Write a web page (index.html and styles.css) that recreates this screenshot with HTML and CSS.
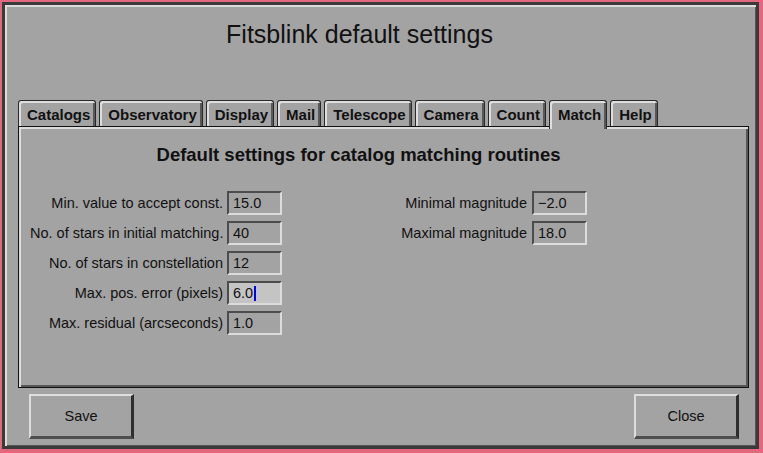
FILE: index.html
```html
<!DOCTYPE html>
<html>
<head>
<meta charset="utf-8">
<title>Fitsblink default settings</title>
<link rel="stylesheet" href="styles.css">
</head>
<body>
<div class="window">
  <div class="title">Fitsblink default settings</div>
  <div class="notebook">
    <div class="tabs">
      <div class="tab">Catalogs</div>
      <div class="tab">Observatory</div>
      <div class="tab">Display</div>
      <div class="tab">Mail</div>
      <div class="tab">Telescope</div>
      <div class="tab">Camera</div>
      <div class="tab">Count</div>
      <div class="tab active">Match</div>
      <div class="tab">Help</div>
    </div>
    <div class="panel">
      <div class="heading">Default settings for catalog matching routines</div>
      <div class="form">
        <div class="grid grid-left">
          <div class="label">Min. value to accept const.</div>
          <div class="entry">15.0</div>
          <div class="label">No. of stars in initial matching.</div>
          <div class="entry">40</div>
          <div class="label">No. of stars in constellation</div>
          <div class="entry">12</div>
          <div class="label">Max. pos. error (pixels)</div>
          <div class="entry focus">6.0<span class="cursor"></span></div>
          <div class="label">Max. residual (arcseconds)</div>
          <div class="entry">1.0</div>
        </div>
        <div class="grid grid-right">
          <div class="label">Minimal magnitude</div>
          <div class="entry">&minus;2.0</div>
          <div class="label">Maximal magnitude</div>
          <div class="entry">18.0</div>
        </div>
      </div>
    </div>
  </div>
  <div class="buttons">
    <div class="button">Save</div>
    <div class="button">Close</div>
  </div>
</div>
</body>
</html>
```

FILE: styles.css
```css
html, body {
  margin: 0;
  padding: 0;
}
body {
  background: #e2677f;
  width: 763px;
  height: 453px;
  padding: 2px 0 0 2px;
  box-sizing: border-box;
  font-family: "Liberation Sans", Arial, sans-serif;
  color: #111;
  overflow: hidden;
}
.window {
  width: 757px;
  height: 447px;
  box-sizing: border-box;
  background: #a3a3a3;
  border: 3px solid #3a3a3a;
  box-shadow: inset 2px 2px 0 #dcdcdc, inset -1px -1px 0 #555;
  display: flex;
  flex-direction: column;
}
.title {
  margin-top: 15px;
  height: 28px;
  line-height: 28px;
  font-size: 25px;
  text-align: center;
  padding-right: 42px;
}
.notebook {
  margin: 52px 0 0 13px;
  width: 731px;
}
.tabs {
  display: flex;
  gap: 3px;
  height: 26px;
  align-items: flex-start;
  position: relative;
  z-index: 1;
}
.tab {
  box-sizing: border-box;
  height: 26px;
  padding: 5px 5px 0 8px;
  line-height: 17px;
  font-size: 15px;
  font-weight: bold;
  border: 1px solid #2a2a2a;
  border-bottom: none;
  border-radius: 3px 3px 0 0;
  box-shadow: inset 2px 2px 0 #dedede, inset -2px 0 0 #585858;
}
.tab.active {
  height: 29px;
  margin-bottom: -3px;
  background: #a3a3a3;
}
.panel {
  box-sizing: border-box;
  height: 262px;
  border: 1px solid #111;
  box-shadow: inset 2px 2px 0 #dcdcdc, inset -2px -2px 0 #575757;
  display: flex;
  flex-direction: column;
}
.heading {
  margin-top: 17px;
  height: 22px;
  line-height: 22px;
  font-size: 18.5px;
  font-weight: bold;
  text-align: center;
  padding-right: 50px;
}
.form {
  display: flex;
  margin-top: 25px;
  padding-left: 11px;
  gap: 115px;
  align-items: flex-start;
}
.grid {
  display: grid;
  grid-auto-rows: 24px;
  row-gap: 6px;
  align-items: center;
}
.grid-left {
  grid-template-columns: 193px 55px;
  column-gap: 4px;
}
.grid-right {
  grid-template-columns: 130px 55px;
  column-gap: 5px;
}
.label {
  font-size: 14.5px;
  line-height: 17px;
  text-align: right;
  white-space: nowrap;
}
.entry {
  box-sizing: border-box;
  height: 24px;
  border-style: solid;
  border-width: 2px;
  border-color: #4c4c4c #dcdcdc #dcdcdc #4c4c4c;
  padding-left: 4px;
  font-size: 14.5px;
  line-height: 20px;
  display: flex;
  align-items: center;
}
.entry.focus {
  background: #c4c4c4;
}
.cursor {
  display: inline-block;
  width: 2px;
  height: 15px;
  background: #0000ff;
  margin-left: 1px;
}
.buttons {
  display: flex;
  justify-content: space-between;
  margin-top: 6px;
  padding: 0 17px 0 24px;
}
.button {
  box-sizing: border-box;
  width: 105px;
  height: 45px;
  border-style: solid;
  border-width: 2px 3px 3px 2px;
  border-color: #dedede #2e2e2e #4e4e4e #dedede;
  font-size: 14.5px;
  display: flex;
  align-items: center;
  justify-content: center;
}
```
